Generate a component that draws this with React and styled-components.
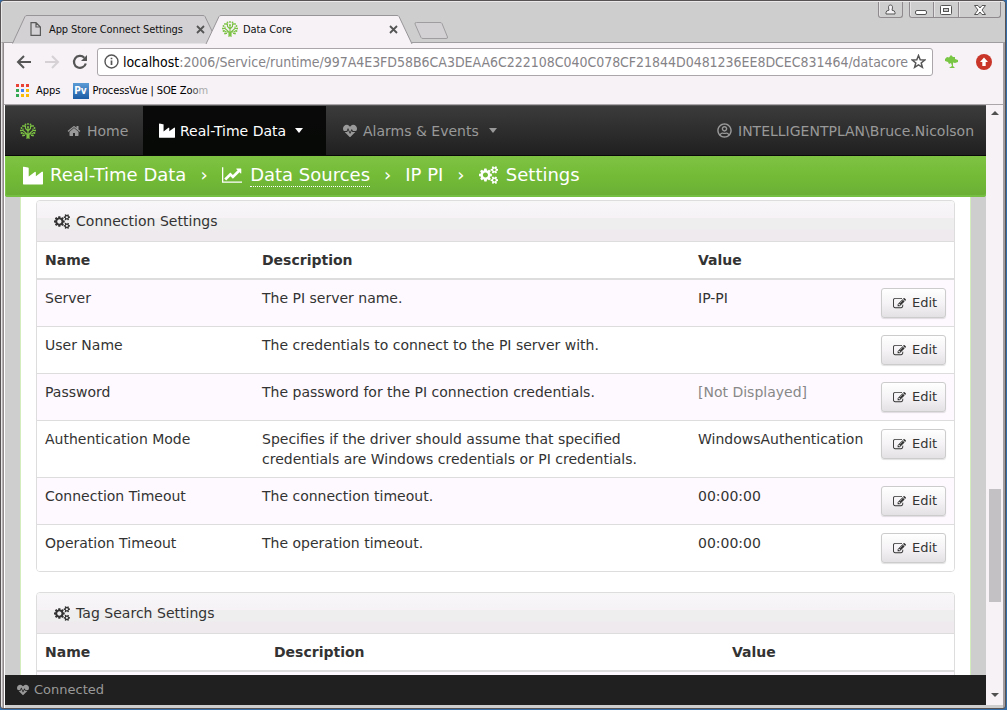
import React from 'react';
import styled, { createGlobalStyle } from 'styled-components';
import { FaHeartbeat, FaRegUserCircle } from 'react-icons/fa';

const Global = createGlobalStyle`
  * { box-sizing: border-box; }
  body { margin: 0; overflow: hidden; background: #346da8; }
  svg { display: block; flex: none; }
`;

const uiFont = '"DejaVu Sans Condensed", "DejaVu Sans", sans-serif';
const pageFont = '"DejaVu Sans", Verdana, sans-serif';

const Window = styled.div`
  display: flex;
  flex-direction: column;
  width: 1006px;
  height: 709px;
  padding: 0 2px 3px 4px;
  border: 1px solid #575355;
  border-radius: 4px 4px 3px 3px;
  background: linear-gradient(90deg, #e9e7e8 0, #e9e7e8 1px, #b5b0b2 1px, #b5b0b2 2px, #918b8e 2px, #918b8e 3px, #fff 3px, #fff 4px, #cecece 4px, #cecece calc(100% - 2px), #a19da0 calc(100% - 2px));
`;

const TitleBar = styled.div`
  display: flex;
  justify-content: space-between;
  height: 42px;
  margin-left: -4px;
  margin-right: -2px;
  padding-left: 10px;
  border-top: 1px solid #ece9eb;
  border-bottom: 1px solid #a09da0;
  border-left: 1px solid #e9e9e9;
  background: #cecece;
  border-radius: 3px 3px 0 0;
`;

const TabStrip = styled.div`
  display: flex;
  padding-top: 13px;
  height: 42px;
`;

const TabBox = styled.div`
  position: relative;
  z-index: ${p => (p.$active ? 2 : 1)};
  display: flex;
  align-items: center;
  width: 208px;
  height: 29px;
  margin-right: -15px;
  padding: 0 15px 1px 17px;
  gap: ${p => (p.$active ? 5 : 7)}px;
  color: #111;
  font: 11px ${uiFont};
`;

const TabShape = styled.svg`
  position: absolute;
  inset: 0;
`;

const TabTitle = styled.span`
  position: relative;
  flex: 1;
  white-space: nowrap;
  letter-spacing: ${p => p.$spacing}px;
`;

const OverTab = styled.span`
  position: relative;
  display: flex;
`;

const WindowControls = styled.div`
  display: flex;
  margin-right: 4px;
  height: 16px;
`;

const Control = styled.div`
  display: flex;
  align-items: center;
  justify-content: center;
  width: ${p => p.$w}px;
  height: 16px;
  margin-right: ${p => p.$gap || 0}px;
  border: 1px solid #8e8a8d;
  border-top: 0;
  border-left-width: ${p => (p.$joined ? 0 : 1)}px;
  border-radius: 0 0 ${p => (p.$round ? 3 : 0)}px ${p => (p.$joined ? 0 : 3)}px;
  box-shadow: inset 1px 0 #e4e2e3;
`;

const Toolbar = styled.div`
  display: flex;
  align-items: center;
  height: 37px;
  margin-left: -1px;
  padding: 0 11px 0 12px;
  background: #f6f2f6;
`;

const NavIcons = styled.div`
  display: flex;
  gap: 12px;
  width: 81px;
`;

const AddressBar = styled.div`
  display: flex;
  align-items: center;
  width: 837px;
  height: 28px;
  padding: 0 6px;
  border: 1px solid #aaa6a9;
  border-radius: 3px;
  background: #fff;
`;

const Url = styled.span`
  flex: 1;
  margin-left: 4px;
  font: 14px ${uiFont};
  color: #858387;
  white-space: nowrap;
  letter-spacing: -0.03px;
  b { font-weight: 400; color: #000; }
`;

const Extensions = styled.div`
  display: flex;
  align-items: center;
  gap: 17px;
  margin-left: 11px;
`;

const Bookmarks = styled.div`
  display: flex;
  align-items: center;
  height: 25px;
  margin-left: -1px;
  padding: 0 0 3px 12px;
  border-bottom: 1px solid #aaa6a9;
  background: #f6f2f6;
  font: 11px ${uiFont};
  color: #000;
`;

const Bookmark = styled.span`
  margin: 0 ${p => p.$gap || 0}px 0 ${p => p.$left}px;
  letter-spacing: ${p => p.$spacing || 0}px;
  white-space: nowrap;
`;

const Faded = styled.span`
  color: ${p => p.$tone};
`;

const PvBadge = styled.span`
  width: 16px;
  height: 16px;
  background: linear-gradient(#5b9bd5, #1c5ca5);
  color: #fff;
  font: bold 10px/16px ${uiFont};
  text-align: center;
`;

const Viewport = styled.div`
  display: flex;
  flex: 1;
  min-height: 0;
`;

const Page = styled.div`
  display: flex;
  flex-direction: column;
  width: 981px;
  background: #cecece;
  font: 14px/20px ${pageFont};
  color: #333;
`;

const NavBar = styled.nav`
  display: flex;
  flex: none;
  height: 51px;
  border-top: 1px solid #555;
  border-bottom: 1px solid #090909;
  background: linear-gradient(#3b3b3b, #202020);
`;

const NavItem = styled.div`
  display: flex;
  align-items: center;
  width: ${p => p.$w}px;
  padding-left: ${p => p.$left}px;
  gap: ${p => p.$gap || 5}px;
  background: ${p => (p.$active ? 'linear-gradient(#090909, #060906)' : 'transparent')};
  color: ${p => (p.$active ? '#fff' : '#999')};
  letter-spacing: ${p => p.$spacing || 0}px;
  white-space: nowrap;
`;

const Caret = styled.span`
  width: 0;
  margin-left: 4px;
  border: 4px solid transparent;
  border-top: 5px solid currentColor;
  border-bottom: 0;
`;

const Spacer = styled.div`
  flex: 1;
`;

const Breadcrumb = styled.div`
  position: relative;
  display: flex;
  flex: none;
  align-items: center;
  height: 41px;
  padding: 0 18px 2px;
  border-radius: 0 0 3px 3px;
  background: linear-gradient(#7fc343, #73bb37 50%, #6aae35);
  box-shadow: inset 0 -2px #75c043, inset 1px 0 #7fc748;
  color: #fff;
  font-size: 18px;
  white-space: nowrap;
`;

const Crumb = styled.span`
  margin-left: ${p => p.$left}px;
  line-height: 22px;
  letter-spacing: ${p => p.$spacing || 0}px;
  border-bottom: 1px dotted ${p => (p.$link ? '#fff' : 'transparent')};
`;

const Main = styled.main`
  flex: 1;
  min-height: 0;
  overflow: hidden;
  margin: 0 15px;
  padding: 3px 15px 0;
  border: solid #d3edbd;
  border-width: 0 1px;
  background: #fff;
`;

const Panel = styled.section`
  margin-bottom: 20px;
  border: 1px solid #ddd;
  border-radius: 4px;
  overflow: hidden;
`;

const PanelHeader = styled.header`
  display: flex;
  align-items: center;
  height: 41px;
  padding-left: 17px;
  gap: 6px;
  border-bottom: 1px solid #ddd;
  background: linear-gradient(#f8f7f8 0, #f6f2f6 17px, #eee 17px, #eee 28px, #efeaee 29px, #eeeaed);
  span { letter-spacing: 0.02px; }
`;

const Row = styled.div`
  display: grid;
  grid-template-columns: ${p => p.$cols};
  min-height: 47px;
  padding: 8px;
  border-top: 1px solid #ddd;
  background: ${p => (p.$odd ? '#fdf9fe' : '#fff')};
`;

const HeadRow = styled(Row)`
  min-height: 38px;
  border-top: 0;
  border-bottom: 2px solid #ddd;
  font-weight: 700;
  & + ${Row} { border-top: 0; min-height: 46px; }
`;

const Cell = styled.div`
  color: ${p => (p.$muted ? '#888' : 'inherit')};
  letter-spacing: ${p => p.$spacing || 0}px;
  white-space: nowrap;
`;

const EditButton = styled.button`
  display: flex;
  align-items: center;
  width: 65px;
  height: 30px;
  padding: 0 0 0 11px;
  gap: 6px;
  border: 1px solid #ccc;
  border-radius: 3px;
  background: linear-gradient(#fff, #f5f3f5 50%, #e4e1e4);
  box-shadow: 0 1px 1px rgba(0, 0, 0, 0.12);
  color: #333;
  font: 13px/18px ${pageFont};
`;

const StatusBar = styled.footer`
  display: flex;
  flex: none;
  align-items: center;
  height: 30px;
  padding-left: 12px;
  gap: 5px;
  background: #202020;
  color: #999;
  font-size: 13px;
`;

const ScrollBar = styled.div`
  display: flex;
  flex-direction: column;
  justify-content: space-between;
  align-items: center;
  width: 17px;
  padding: 6px 2px 8px;
  background: #f6f2f6;
`;

const Thumb = styled.div`
  width: 12px;
  height: 113px;
  margin-top: 282px;
  background: #c4c1c5;
`;

const Arrow = styled.span`
  border: 4px solid transparent;
  border-top: ${p => (p.$up ? '0' : '4px solid #505050')};
  border-bottom: ${p => (p.$up ? '4px solid #505050' : '0')};
`;

const iconPaths = {
  home: [1792, 'M1472 992v480q0 26-19 45t-45 19h-384v-384h-256v384h-384q-26 0-45-19t-19-45v-480q0-1 .5-3t.5-3l575-474 575 474q1 2 1 6zm223-69l-62 74q-8 9-21 11h-3q-13 0-21-7l-692-577-692 577q-12 8-24 7-13-2-21-11l-62-74q-8-10-7-23.5t11-21.5l719-599q32-26 76-26t76 26l244 204v-195q0-14 9-23t23-9h192q14 0 23 9t9 23v408l219 182q10 8 11 21.5t-7 23.5z'],
  industry: [1792, 'M448 128q26 0 45 19t19 45v750l538-410q16-14 38-14 26 0 45 19t19 45v330l538-394q16-14 38-14 26 0 45 19t19 45v1024q0 26-19 45t-45 19h-1664q-26 0-45-19t-19-45v-1472q0-26 19-45t45-19z'],
  chart: [2048, 'M2048 1536v128h-2048v-1536h128v1408h1920zm-128-1248v435q0 21-19.5 29.5t-35.5-7.5l-121-121-633 633q-10 10-23 10t-23-10l-233-233-416 416-192-192 585-585q10-10 23-10t23 10l233 233 464-464-121-121q-16-16-7.5-35.5t29.5-19.5h435q14 0 23 9t9 23z'],
  edit: [1792, 'M888 1184l116-116-152-152-116 116v56h96v96h56zm440-720q-16-16-33 1l-350 350q-17 17-1 33t33-1l350-350q17-17 1-33zm80 594v190q0 119-84.5 203.5t-203.5 84.5h-832q-119 0-203.5-84.5t-84.5-203.5v-832q0-119 84.5-203.5t203.5-84.5h832q63 0 117 25 15 7 18 23 3 17-9 29l-49 49q-14 14-32 8-23-6-45-6h-832q-66 0-113 47t-47 113v832q0 66 47 113t113 47h832q66 0 113-47t47-113v-126q0-13 9-22l64-64q15-15 35-7t20 29zm-96-738l288 288-672 672h-288v-288zm444 132l-92 92-288-288 92-92q28-28 68-28t68 28l152 152q28 28 28 68t-28 68z'],
  cogs: [1920, 'M896 896q0-106-75-181t-181-75-181 75-75 181 75 181 181 75 181-75 75-181zm768 512q0-52-38-90t-90-38-90 38-38 90q0 53 37.5 90.5t90.5 37.5 90.5-37.5 37.5-90.5zm0-1024q0-52-38-90t-90-38-90 38-38 90q0 53 37.5 90.5t90.5 37.5 90.5-37.5 37.5-90.5zm-384 421v185q0 10-7 19.5t-16 10.5l-155 24q-11 35-32 76 34 48 90 115 7 11 7 20 0 12-7 19-23 30-82.5 89.5t-78.5 59.5q-11 0-21-7l-115-90q-37 19-77 31-11 108-23 155-7 24-30 24h-186q-11 0-20-7.5t-10-17.5l-23-153q-34-10-75-31l-118 89q-7 7-20 7-11 0-21-8-144-133-144-160 0-9 7-19 10-14 41-53t47-61q-23-44-35-82l-152-24q-10-1-17-9.5t-7-19.5v-185q0-10 7-19.5t16-10.5l155-24q11-35 32-76-34-48-90-115-7-11-7-20 0-12 7-20 22-30 82-89t79-59q11 0 21 7l115 90q34-18 77-32 11-108 23-154 7-24 30-24h186q11 0 20 7.5t10 17.5l23 153q34 10 75 31l118-89q8-7 20-7 11 0 21 8 144 133 144 160 0 8-7 19-12 16-42 54t-45 60q23 48 34 82l152 23q10 2 17 10.5t7 19.5zm640 533v140q0 16-149 31-12 27-30 52 51 113 51 138 0 4-4 7-122 71-124 71-8 0-46-47t-52-68q-20 2-30 2t-30-2q-14 21-52 68t-46 47q-2 0-124-71-4-3-4-7 0-25 51-138-18-25-30-52-149-15-149-31v-140q0-16 149-31 13-29 30-52-51-113-51-138 0-4 4-7 4-2 35-20t59-34 30-16q8 0 46 46.5t52 67.5q20-2 30-2t30 2q51-71 92-112l6-2q4 0 124 70 4 3 4 7 0 25-51 138 17 23 30 52 149 15 149 31zm0-1024v140q0 16-149 31-12 27-30 52 51 113 51 138 0 4-4 7-122 71-124 71-8 0-46-47t-52-68q-20 2-30 2t-30-2q-14 21-52 68t-46 47q-2 0-124-71-4-3-4-7 0-25 51-138-18-25-30-52-149-15-149-31v-140q0-16 149-31 13-29 30-52-51-113-51-138 0-4 4-7 4-2 35-20t59-34 30-16q8 0 46 46.5t52 67.5q20-2 30-2t30 2q51-71 92-112l6-2q4 0 124 70 4 3 4 7 0 25-51 138 17 23 30 52 149 15 149 31z'],
};

const Icon = ({ name, size }) => {
  const [w, d] = iconPaths[name];
  return (
    <svg width={(size * w) / 1792} height={size} viewBox={`0 0 ${w} 1792`} fill="currentColor">
      <path d={d} />
    </svg>
  );
};

const Tree = ({ size = 16, color = '#7cc243' }) => (
  <svg width={size} height={size} viewBox="0 0 16 16" fill="none" stroke={color} strokeWidth="1.1">
    <path d="M7 16V11L3 7.500V5.500M9 16V11L13 7.500V5.500M8 15V4M8 8L5.500 5.500V2.500M8 8L10.500 5.500V2.500M7 11H4L2 9.500M9 11H12L14 9.500M3 7.500H1M13 7.500H15M5.500 4L4 2.500M10.500 4L12 2.500M3 12.500H5M11 12.500H13" />
    <g fill={color} stroke="none">
      {[[8, 1], [5.5, 1.5], [10.5, 1.5], [3, 3], [13, 3], [1.5, 5], [14.5, 5], [.8, 7.500], [15.2, 7.500], [1.5, 10], [14.5, 10], [3, 12.500], [13, 12.500], [8, 4]].map(([x, y]) => (
        <circle key={`${x}-${y}`} cx={x} cy={y} r="0.9" />
      ))}
    </g>
  </svg>
);

const CloseX = () => (
  <svg width="9" height="9" viewBox="0 0 9 9" stroke="#555" strokeWidth="1.8">
    <path d="M1 1L8 8M8 1L1 8" />
  </svg>
);

const Tab = ({ active, icon, title, spacing }) => (
  <TabBox $active={active}>
    <TabShape width="208" height="29" viewBox="0 0 208 29">
      <path d={active ? 'M1 29L14 1.500Q14.500 .5 16 .5H192Q193.500 .5 194 1.500L207 29' : 'M.5 28.500L13 1.500Q13.500 .5 15 .5H191Q192.500 .5 193 1.500L206 28.500'} fill={active ? '#f6f2f6' : '#d4d1d4'} stroke="#989598" />
    </TabShape>
    <OverTab>{icon}</OverTab>
    <TabTitle $spacing={spacing}>{title}</TabTitle>
    <OverTab><CloseX /></OverTab>
  </TabBox>
);

const FileIcon = () => (
  <svg width="13" height="14" viewBox="0 0 13 14" fill="none" stroke="#5a5a5a" strokeWidth="1.2">
    <path d="M2 .6H7L11.400 5V13.400H2ZM7 .6V5H11.400" />
  </svg>
);

const Chrome = () => (
  <>
    <TitleBar>
      <TabStrip>
        <Tab icon={<FileIcon />} title="App Store Connect Settings" spacing={-0.1} />
        <Tab active icon={<Tree size={16} />} title="Data Core" spacing={-0.1} />
        <svg width="52" height="29" viewBox="0 0 52 29" fill="#d4d1d4" stroke="#a09da0">
          <path d="M18.500 7.500H42Q43.500 7.500 44 8.500L49.500 22Q50 23.500 48 23.500H25Q23.500 23.500 23 22.500L17 9Q16.500 7.500 18.500 7.500Z" />
        </svg>
      </TabStrip>
      <WindowControls>
        <Control $w={25} $gap={6} $round>
          <svg width="11" height="11" viewBox="0 0 11 11" fill="#f4f2f4" stroke="#555">
            <path d="M1 10V8.500Q1 6.500 4 6.200Q2.500 1 5.500 1Q8.500 1 7 6.200Q10 6.500 10 8.500V10Z" />
          </svg>
        </Control>
        <Control $w={25}>
          <svg width="13" height="12" viewBox="0 0 13 12" fill="#fff" stroke="#555"><rect x=".5" y="6.500" width="11" height="4" rx="1.500" /></svg>
        </Control>
        <Control $w={25} $joined>
          <svg width="12" height="10" viewBox="0 0 12 10" fill="#fff" stroke="#555"><rect x=".5" y=".5" width="11" height="9" rx="1" /><rect x="3.500" y="3.500" width="5" height="3" fill="#cecece" /></svg>
        </Control>
        <Control $w={42} $joined $round>
          <svg width="12" height="10" viewBox="0 0 12 10" fill="#fff" stroke="#555"><path d="M.5 .5H4L6 3L8 .5H11.500L8 5L11.500 9.500H8L6 7L4 9.500H.5L4 5Z" /></svg>
        </Control>
      </WindowControls>
    </TitleBar>
    <Toolbar>
      <NavIcons>
        <svg width="16" height="16" viewBox="0 0 16 16" fill="none" stroke="#555" strokeWidth="2"><path d="M15 8H2M8 2L2 8L8 14" /></svg>
        <svg width="16" height="16" viewBox="0 0 16 16" fill="none" stroke="#d5d1d5" strokeWidth="2"><path d="M1 8H14M8 2L14 8L8 14" /></svg>
        <svg width="16" height="16" viewBox="0 0 16 16" fill="none" stroke="#555" strokeWidth="2.2"><path d="M13.800 9.500A6 6 0 1 1 12.300 3.700" /><path d="M15 1V7H9Z" fill="#555" stroke="none" /></svg>
      </NavIcons>
      <AddressBar>
        <svg width="15" height="15" viewBox="0 0 15 15" fill="none" stroke="#555" strokeWidth="1.400"><circle cx="7.500" cy="7.500" r="6.500" /><path d="M7.500 6.500V11M7.500 3.700V5.300" strokeWidth="1.700" /></svg>
        <Url><b>localhost</b>:2006/Service/runtime/997A4E3FD58B6CA3DEAA6C222108C040C078CF21844D0481236EE8DCEC831464/datacore</Url>
        <svg width="15" height="15" viewBox="0 0 15 15" fill="none" stroke="#555" strokeWidth="1.500"><path d="M7.500 1.500L9.200 5.700L13.700 6L10.200 8.900L11.400 13.300L7.500 10.900L3.600 13.300L4.800 8.900L1.300 6L5.800 5.700Z" /></svg>
      </AddressBar>
      <Extensions>
        <svg width="15" height="14" viewBox="0 0 15 14" fill="#79c544"><path d="M1 4L3 2L5 2.500L7 0L9 2L11 2L11 4L14 5L14 7L11 8L9 7.500L9 11L11 13H5L8 11L7 8L5 9L4 7L1 6Z" /></svg>
        <svg width="16" height="16" viewBox="0 0 16 16"><circle cx="8" cy="8" r="8" fill="#c93529" /><path d="M8 3.500L12 8H9.700V12H6.300V8H4Z" fill="#fff" /></svg>
      </Extensions>
    </Toolbar>
    <Bookmarks>
      <svg width="13" height="13" viewBox="0 0 13 13">
        {['#ea4335', '#ea4335', '#ea4335', '#34a853', '#4285f4', '#fbbc05', '#34a853', '#fbbc05', '#fbbc05'].map((c, i) => (
          <rect key={i} x={(i % 3) * 5} y={Math.floor(i / 3) * 5} width="3" height="3" fill={c} />
        ))}
      </svg>
      <Bookmark $left={7} $gap={12}>Apps</Bookmark>
      <PvBadge>Pv</PvBadge>
      <Bookmark $left={4} $spacing={-0.1}>ProcessVue | SOE Zo<Faded $tone="#555">o</Faded><Faded $tone="#aaa">m</Faded></Bookmark>
    </Bookmarks>
  </>
);

const settings = [
  ['Server', ['The PI server name.'], 'IP-PI'],
  ['User Name', ['The credentials to connect to the PI server with.'], ''],
  ['Password', ['The password for the PI connection credentials.'], '[Not Displayed]'],
  ['Authentication Mode', ['Specifies if the driver should assume that specified', 'credentials are Windows credentials or PI credentials.'], 'WindowsAuthentication'],
  ['Connection Timeout', ['The connection timeout.'], '00:00:00'],
  ['Operation Timeout', ['The operation timeout.'], '00:00:00'],
];

const connectionCols = '217px 436px 183px 65px';
const tagCols = '229px 458px 1fr';

const SettingsPanel = ({ title, cols, rows }) => (
  <Panel>
    <PanelHeader><Icon name="cogs" size={15} /><span>{title}</span></PanelHeader>
    <HeadRow $cols={cols}><Cell>Name</Cell><Cell>Description</Cell><Cell>Value</Cell></HeadRow>
    {rows.map(([name, description, value], i) => (
      <Row key={name} $cols={cols} $odd={i % 2 === 0}>
        <Cell>{name}</Cell>
        <Cell>{description.map(line => <div key={line}>{line}</div>)}</Cell>
        <Cell $muted={value.startsWith('[')}>{value}</Cell>
        {name && <EditButton><Icon name="edit" size={13} />Edit</EditButton>}
      </Row>
    ))}
  </Panel>
);

export default function App() {
  return (
    <>
      <Global />
      <Window>
        <Chrome />
        <Viewport>
          <Page>
            <NavBar>
              <NavItem $w={46} $left={15}><Tree size={16} /></NavItem>
              <NavItem $w={92} $left={16} $gap={6}><Icon name="home" size={14} />Home</NavItem>
              <NavItem $w={183} $left={16} $active><Icon name="industry" size={16} />Real-Time Data<Caret /></NavItem>
              <NavItem $w={190} $left={17} $gap={6}><FaHeartbeat size={14} />Alarms &amp; Events<Caret /></NavItem>
              <Spacer />
              <NavItem $w={275} $left={6} $gap={6}><FaRegUserCircle size={15} />INTELLIGENTPLAN\Bruce.Nicolson</NavItem>
            </NavBar>
            <Breadcrumb>
              <Icon name="industry" size={20} />
              <Crumb $left={7}>Real-Time Data</Crumb>
              <Crumb $left={14}>›</Crumb>
              <Crumb $left={14}><Icon name="chart" size={18} /></Crumb>
              <Crumb $left={8} $link>Data Sources</Crumb>
              <Crumb $left={14}>›</Crumb>
              <Crumb $left={14}>IP PI</Crumb>
              <Crumb $left={14}>›</Crumb>
              <Crumb $left={14}><Icon name="cogs" size={18} /></Crumb>
              <Crumb $left={8}>Settings</Crumb>
            </Breadcrumb>
            <Main>
              <SettingsPanel title="Connection Settings" cols={connectionCols} rows={settings} />
              <SettingsPanel title="Tag Search Settings" cols={tagCols} rows={[['', [''], '']]} />
            </Main>
            <StatusBar><FaHeartbeat size={12} />Connected</StatusBar>
          </Page>
          <ScrollBar><Arrow $up /><Thumb /><Arrow /></ScrollBar>
        </Viewport>
      </Window>
    </>
  );
}
